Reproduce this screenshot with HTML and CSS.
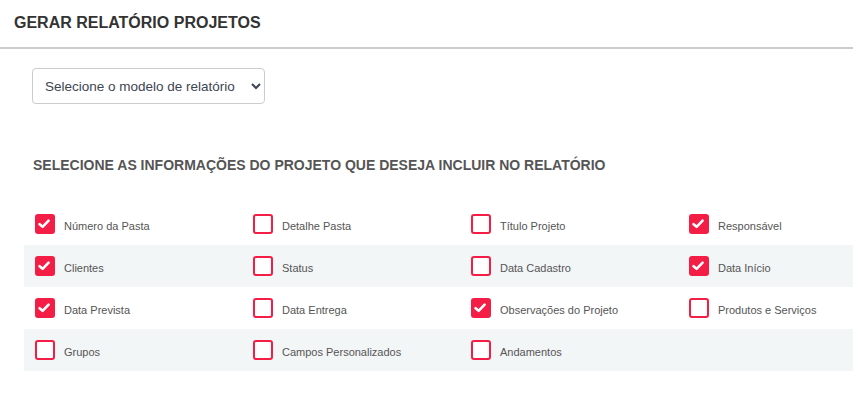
FILE: index.html
```html
<!DOCTYPE html>
<html lang="pt-BR">
<head>
<meta charset="utf-8">
<title>Gerar Relatório Projetos</title>
<link rel="stylesheet" href="styles.css">
</head>
<body>
<header class="page-header">
  <h1 class="page-title">GERAR RELATÓRIO PROJETOS</h1>
</header>
<main class="content">
  <div class="select-wrap">
    <select class="model-select">
      <option>Selecione o modelo de relatório</option>
    </select>
  </div>
  <h2 class="section-title">SELECIONE AS INFORMAÇÕES DO PROJETO QUE DESEJA INCLUIR NO RELATÓRIO</h2>
  <div class="options">
    <div class="row">
      <label class="opt"><span class="box checked"><svg viewBox="0 0 16 16"><path d="M2.6 8.2 L5.6 10.8 L11.6 4.6" /></svg></span><span class="txt">Número da Pasta</span></label>
      <label class="opt"><span class="box"></span><span class="txt">Detalhe Pasta</span></label>
      <label class="opt"><span class="box"></span><span class="txt">Título Projeto</span></label>
      <label class="opt"><span class="box checked"><svg viewBox="0 0 16 16"><path d="M2.6 8.2 L5.6 10.8 L11.6 4.6" /></svg></span><span class="txt">Responsável</span></label>
    </div>
    <div class="row alt">
      <label class="opt"><span class="box checked"><svg viewBox="0 0 16 16"><path d="M2.6 8.2 L5.6 10.8 L11.6 4.6" /></svg></span><span class="txt">Clientes</span></label>
      <label class="opt"><span class="box"></span><span class="txt">Status</span></label>
      <label class="opt"><span class="box"></span><span class="txt">Data Cadastro</span></label>
      <label class="opt"><span class="box checked"><svg viewBox="0 0 16 16"><path d="M2.6 8.2 L5.6 10.8 L11.6 4.6" /></svg></span><span class="txt">Data Início</span></label>
    </div>
    <div class="row">
      <label class="opt"><span class="box checked"><svg viewBox="0 0 16 16"><path d="M2.6 8.2 L5.6 10.8 L11.6 4.6" /></svg></span><span class="txt">Data Prevista</span></label>
      <label class="opt"><span class="box"></span><span class="txt">Data Entrega</span></label>
      <label class="opt"><span class="box checked"><svg viewBox="0 0 16 16"><path d="M2.6 8.2 L5.6 10.8 L11.6 4.6" /></svg></span><span class="txt">Observações do Projeto</span></label>
      <label class="opt"><span class="box"></span><span class="txt">Produtos e Serviços</span></label>
    </div>
    <div class="row alt">
      <label class="opt"><span class="box"></span><span class="txt">Grupos</span></label>
      <label class="opt"><span class="box"></span><span class="txt">Campos Personalizados</span></label>
      <label class="opt"><span class="box"></span><span class="txt">Andamentos</span></label>
      <span class="opt empty"></span>
    </div>
  </div>
</main>
</body>
</html>
```

FILE: styles.css
```css
html, body {
  margin: 0;
  padding: 0;
  background: #ffffff;
  overflow: hidden;
}
body {
  font-family: "Liberation Sans", Arial, sans-serif;
  color: #555555;
  width: 853px;
}
.page-header {
  height: 47px;
  border-bottom: 2px solid #cccccc;
  box-sizing: content-box;
  display: flex;
  align-items: center;
  padding: 0 14px;
}
.page-title {
  margin: 0;
  font-size: 16px;
  font-weight: bold;
  color: #333333;
  position: relative;
  top: -1px;
}
.content {
  padding: 19px 0 0 24px;
  overflow: hidden;
}
.select-wrap {
  padding-left: 8px;
}
.model-select {
  width: 233px;
  height: 36px;
  border: 1px solid #cccccc;
  border-radius: 4px;
  background: #ffffff;
  font-family: "Liberation Sans", Arial, sans-serif;
  font-size: 13.5px;
  color: #3d4552;
  padding: 0 6px 0 8px;
}
.section-title {
  margin: 53px 0 0 9px;
  font-size: 14px;
  font-weight: bold;
  color: #555555;
  height: 16px;
  line-height: 16px;
}
.options {
  margin-top: 30px;
  overflow: hidden;
}
.row {
  display: grid;
  grid-template-columns: repeat(4, 218px);
  height: 42px;
  align-items: center;
}
.row.alt {
  background: #f3f6f7;
}
.opt {
  display: flex;
  align-items: center;
  padding-left: 11px;
  font-size: 11px;
  color: #555555;
  height: 20px;
}
.txt {
  padding-top: 3px;
}
.box {
  width: 20px;
  height: 20px;
  box-sizing: border-box;
  border: 2px solid #f31d45;
  border-radius: 3px;
  background: #ffffff;
  margin-right: 9px;
  flex: none;
  display: flex;
}
.box.checked {
  background: #f31d45;
}
.box svg {
  width: 16px;
  height: 16px;
}
.box svg path {
  fill: none;
  stroke: #ffffff;
  stroke-width: 2.6;
  stroke-linecap: round;
  stroke-linejoin: round;
}
```
